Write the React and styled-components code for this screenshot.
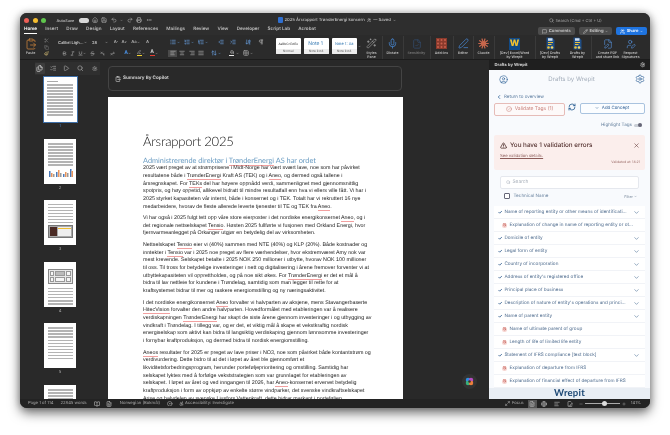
import React from 'react';
import styled, { createGlobalStyle } from 'styled-components';
import {
  Home, Save, Undo2, Redo2, Printer, MoreHorizontal, Search, MessageSquare, Pencil, ChevronDown, ChevronLeft,
  Scissors, Copy, Paintbrush, Bold, Italic, Underline, Strikethrough, Subscript, Superscript, List, ListOrdered,
  ListTree, IndentDecrease, IndentIncrease, ArrowDownAZ, Pilcrow, AlignLeft, AlignCenter, AlignRight, AlignJustify,
  ArrowUpDown, PaintBucket, Grid2x2, Mic, Files, ListChecks, Play, Settings, CircleUser, RefreshCw, Plus, TriangleAlert, X,
  Check, Ban, CircleCheck, Maximize2, FileText, Globe, BookOpen, FileSignature, Minus, Accessibility, CircleDot,
  ClipboardPaste, FilePen, UserPen, Wand2, PenLine, Users, FileCheck
} from 'lucide-react';

const Global = createGlobalStyle`
  html, body { margin: 0; padding: 0; background: #fff; width: 670px; height: 435px; overflow: hidden; }
  * { box-sizing: border-box; }
`;

const Page = styled.div`
  width: 670px; height: 435px; padding: 13px 20px 27px; background: #fff;
  font-family: "Inter", "Liberation Sans", sans-serif; filter: blur(.35px); text-rendering: geometricPrecision;
`;
const Win = styled.div`
  width: 630px; height: 395px; border-radius: 7px; overflow: hidden; background: #2a2a2a; color: #c8c8c8;
  display: flex; flex-direction: column; box-shadow: 0 5px 12px rgba(0,0,0,.55), 0 0 7px rgba(0,0,0,.25);
`;
const TitleBar = styled.div`
  height: 13px; flex: none; display: flex; align-items: center; padding: 1px 0 0 4px; background: #2e2e2e; position: relative;
`;
const Light = styled.span`
  width: 5px; height: 5px; border-radius: 50%; background: ${p => p.$c}; margin-right: 3.5px; flex: none;
`;
const AutoLabel = styled.span`font-size: 3.8px; font-weight: 600; margin: 0 3px 0 7px; color: #bdbdbd; width: 19px;`;
const Toggle = styled.span`
  width: 10px; height: 5px; border-radius: 3px; background: #d8d8d8; display: block; margin-right: 3px; flex: none;
`;
const QuickIcons = styled.div`display: flex; gap: 3.5px; align-items: center; color: #aaa; width: 186px;`;
const DocTitle = styled.div`
  display: flex; align-items: center; gap: 2px; font-size: 4.2px; color: #c4c4c4; width: 271px; flex: none; font-weight: 500;
`;
const WordBadge = styled.span`
  width: 5px; height: 6px; border-radius: 1px; background: #2f6fd0; display: block; flex: none;
`;
const SearchHint = styled.div`display: flex; align-items: center; gap: 2px; font-size: 4.05px; color: #a8a8a8;`;

const TabRow = styled.div`height: 9px; flex: none; display: flex; align-items: center; padding: 0 3px 0 4px; background: #2e2e2e;`;
const Tabs = styled.div`display: flex; gap: 8.2px; flex: 1;`;
const Tab = styled.span`
  font-size: 4.6px; font-weight: 600; color: ${p => p.$on ? '#fff' : '#bdbdbd'}; padding-bottom: .5px;
  border-bottom: 1px solid ${p => p.$on ? '#fff' : 'transparent'}; line-height: 6px; white-space: nowrap;
`;
const Actions = styled.div`display: flex; gap: 4px; margin-top: 1px;`;
const ActionBtn = styled.span`
  height: 8px; width: ${p => p.$w}px; border-radius: 2px; background: ${p => p.$blue ? '#1f74e0' : '#4c4c4c'}; color: ${p => p.$blue ? '#fff' : '#c9c9c9'};
  font-size: 4.2px; font-weight: 600; display: flex; align-items: center; justify-content: center; gap: 1.5px;
`;

const Ribbon = styled.div`
  height: 25px; flex: none; background: #2b2b2b; border-bottom: 1px solid #1c1c1c; display: flex; padding: 1px 0 0 4px; align-items: flex-start;
`;
const PasteBox = styled.div`
  width: 13px; flex: none; display: flex; flex-direction: column; align-items: center; gap: 1px; font-size: 3.6px; color: #ccc; font-weight: 500;
  margin-top: 2px; margin-right: 3px;
`;
const ClipCol = styled.div`width: 13px; flex: none; display: flex; flex-direction: column; gap: 1.5px; align-items: center; color: #777; margin-top: 2px; margin-right: 4px;`;
const ToolGroup = styled.div`
  display: flex; flex-direction: column; gap: 4px; width: ${p => p.$w}px; flex: none; padding-top: 2.5px; margin-right: ${p => p.$mr || 0}px;
`;
const ToolRow = styled.div`display: flex; align-items: center; height: 7px;`;
const Tool = styled.span`
  width: ${p => p.$w}px; flex: none; height: 7px; display: flex; align-items: center; justify-content: center; color: ${p => p.$c || '#b5b5b5'};
  font-size: 4.2px; font-weight: 600; background: ${p => p.$on ? '#4a4a4a' : 'transparent'};
`;
const StyleCaret = styled(Tool)`height: 16px; margin-top: 2px;`;
const FontField = styled.span`
  width: ${p => p.$w}px; flex: none; height: 6.5px; margin-right: 3px; font-size: 4px; font-weight: 600; color: #c6c6c6; display: flex; align-items: center; justify-content: space-between;
  white-space: nowrap; padding: 0 1px;
`;
const Up = styled.sup`font-size: 3px;`;
const Underbar = styled.span`display: block; width: 5px; height: 1.3px; background: ${p => p.$c}; margin-top: .3px;`;
const StackTool = styled.span`display: flex; flex-direction: column; align-items: center; line-height: 4px; font-size: 5px; font-weight: 700; color: ${p => p.$c};`;
const Styles = styled.div`display: flex; gap: 3.5px; margin-top: 2px;`;
const StyleCard = styled.div`
  width: 24.5px; height: 16px; background: #fff; border-radius: 1px; display: flex; flex-direction: column; overflow: hidden; color: ${p => p.$c || '#333'}; flex: none;
`;
const StylePreview = styled.div`flex: 1; font-size: ${p => p.$fs || 3.4}px; display: flex; align-items: center; justify-content: center; white-space: nowrap;`;
const StyleName = styled.div`font-size: 3px; text-align: center; line-height: 5px; color: #555; background: #ededed;`;
const Large = styled.div`
  width: ${p => p.$w}px; flex: none; display: flex; flex-direction: column; align-items: center; color: ${p => p.$dim ? '#777' : '#bdbdbd'}; padding-top: 1.5px;
  border-right: ${p => p.$sep ? '1px solid #3a3a3a' : 'none'}; height: 23px;
`;
const LargeIcon = styled.div`height: 12px; display: flex; align-items: center; justify-content: center;`;
const LargeLabel = styled.div`font-size: 3.5px; font-weight: 600; line-height: 4px; text-align: center; white-space: nowrap; margin-top: 1px;`;
const WLogo = styled.div`
  width: 11px; height: 12px; background: #114a86; color: #f2c230; font-size: 9px; line-height: 12px; font-weight: 800; text-align: center;
`;

const Body = styled.div`flex: 1; min-height: 0; display: flex; background: #292929;`;
const Rail = styled.div`width: 87px; flex: none; display: flex; flex-direction: column; align-items: center; overflow: hidden;`;
const RailTabs = styled.div`
  width: 65px; margin-left: 15px; align-self: flex-start; height: 13px; margin-top: 2px; background: #2f2f2f; display: flex; align-items: center; flex: none; gap: 3.4px; color: #a4a4a4;
`;
const RailTab = styled.span`
  width: 10px; height: 11px; display: flex; align-items: center; justify-content: center; background: ${p => p.$on ? '#3d3d3d' : 'transparent'}; color: ${p => p.$on ? '#d2d2d2' : 'inherit'}; border-radius: 1px;
  margin-left: ${p => p.$push || 0}px;
`;
const Thumbs = styled.div`display: flex; flex-direction: column; align-items: center; padding: 2px 7px 0 0;`;
const ThumbItem = styled.div`height: 61.5px; display: flex; flex-direction: column; align-items: center; flex: none;`;
const ThumbPage = styled.div`
  width: ${p => p.$on ? 33 : 32}px; height: 45px; background: #fff; padding: 4px 3.5px; display: flex; flex-direction: column; gap: 1.5px; flex: none;
  outline: ${p => p.$on ? '1px solid #3e6fa8' : 'none'};
`;
const ThumbTitle = styled.div`width: 11px; height: 1.2px; background: #aaa;`;
const ThumbText = styled.div`
  height: ${p => p.$h}px; flex: none;
  background: repeating-linear-gradient(#b4b4b4 0 .6px, #fff .6px 1.5px);
`;
const ThumbNum = styled.div`font-size: 4.2px; line-height: 9px; color: ${p => p.$on ? '#4a7bb5' : '#a8a8a8'};`;
const ThumbBand = styled.div`
  height: 13px; background: #a8a8a8; border: 1px solid #777; padding: 1px; display: flex; gap: 1px; flex: none;
`;
const Portrait = styled.div`width: 7px; background: #4a2a24; flex: none;`;
const BandBody = styled.div`flex: 1; background: #eee; padding-top: 1.5px;`;
const BandBar = styled.div`height: 1.2px; background: #f0bd30;`;
const TableMock = styled.div`
  height: 15px; border: 1px solid #888; background: #e8e8e8; margin: 2px 0; flex: none; display: grid; grid-template-columns: 1fr 2fr 1fr; gap: .8px; padding: 1px;
`;
const TableCell = styled.div`background: ${p => p.$d ? '#bbb' : '#f6f6f6'}; border: .5px solid #999;`;

const DocArea = styled.div`width: 382px; flex: none; padding: 6px 0 0 1px; display: flex; flex-direction: column; overflow: hidden; position: relative;`;
const SummaryBar = styled.div`
  width: 294px; height: 25px; flex: none; border: 1px solid #444; border-radius: 4px; display: flex; align-items: center; gap: 2px; padding-left: 6px;
  font-size: 4.6px; font-weight: 700; color: #cfcfcf; margin-bottom: 6px;
`;
const Sheet = styled.div`
  width: 295px; flex: 1; background: #fff; padding: 35px 0 0 35px; color: #1c1c1c; overflow: hidden;
`;
const DocTitleH = styled.div`font: 300 13px/18px "Lato", sans-serif; letter-spacing: -.2px; color: #111; white-space: nowrap;`;
const SubHead = styled.div`font: 400 7.35px/9px "Lato", sans-serif; color: #6a9cc2; white-space: nowrap; margin: 5.5px 0 .7px;`;
const Para = styled.div`margin: 0 0 3.9px;`;
const Line = styled.div`font: 400 5.33px/7.67px "Liberation Sans", sans-serif; white-space: nowrap;`;
const Spell = styled.span`border-bottom: .5px solid #f2a0a0;`;
const CopilotFab = styled.div`
  position: absolute; left: 355px; top: 314px; width: 15px; height: 15px; border-radius: 50%; background: #333; display: flex; align-items: center; justify-content: center;
`;

const Side = styled.div`width: 161px; flex: none; display: flex; flex-direction: column; overflow: hidden;`;
const SideHead = styled.div`
  height: 10px; flex: none; background: #1f1f1f; display: flex; align-items: center; justify-content: space-between; padding: 0 5px 0 5.5px;
  font-size: 4.2px; font-weight: 700; color: #d5d5d5;
`;
const SidePane = styled.div`flex: 1; min-height: 0; background: #f8fafd; overflow: hidden; padding: 0 5px; display: flex; flex-direction: column; color: #4d6b90;`;
const PaneTop = styled.div`height: 18px; flex: none; display: flex; align-items: center; justify-content: space-between; padding: 0 0 0 5px; color: #2a5e96;`;
const PaneTitle = styled.span`font-size: 6.1px; color: #a3adba;`;
const BackLink = styled.div`display: flex; align-items: center; gap: 2px; font-size: 4.5px; height: 8px; margin-top: 6px; padding-left: 2px; color: #5d7da0;`;
const BtnRow = styled.div`display: flex; align-items: flex-start; height: 14px; flex: none; margin-top: 2px; gap: 2.5px;`;
const ValidateBtn = styled.div`
  width: 71px; height: 13.5px; border: .8px solid #e6bcb8; border-radius: 2px; display: flex; align-items: center; justify-content: center; gap: 3px; font-size: 5px; color: #c9807a; background: #fdf9f9;
`;
const AddBtn = styled.div`
  width: 65px; height: 11.5px; border: .8px solid #a9c3df; border-radius: 2px; display: flex; align-items: center; justify-content: center; gap: 3px; font-size: 4.4px; color: #3d6a9d; background: #fbfdff;
  margin-left: 1.5px;
`;
const HighlightRow = styled.div`display: flex; align-items: center; justify-content: flex-end; gap: 2px; height: 8px; margin-top: 5.5px; font-size: 4.6px; padding-right: 3px; color: #67829f;`;
const MiniSwitch = styled.span`width: 8px; height: 3px; background: #c9ced6; border-radius: 2px; display: flex; justify-content: flex-end; align-items: center;`;
const SwitchKnob = styled.span`width: 4px; height: 4px; background: #667; border-radius: 50%; display: block;`;
const Alert = styled.div`
  margin-top: 6px; height: 35px; flex: none; background: #fbeeec; border-radius: 2px; padding: 6.5px 5px 0 6px; color: #4a2a28; display: flex; flex-direction: column;
`;
const AlertTop = styled.div`display: flex; align-items: center; gap: 3px; font-size: 6.3px; font-weight: 500; height: 8px;`;
const AlertText = styled.span`flex: 1; color: #53302e; white-space: nowrap;`;
const AlertLink = styled.div`font-size: 4.2px; text-decoration: underline; margin-top: 5px; line-height: 5px; color: #8b5b58;`;
const AlertTime = styled.div`font-size: 3.4px; text-align: right; color: #9a6b68; line-height: 4px; margin-top: .5px;`;
const SearchBox = styled.div`
  margin: 6px 6px 0; height: 13px; flex: none; background: #fff; border: .7px solid #e5e8ee; border-radius: 2px; display: flex; align-items: center; gap: 2px; padding-left: 5px; font-size: 4.8px; color: #a9b1bb;
`;
const HeadRow = styled.div`display: flex; align-items: center; height: 13px; flex: none; padding: 2px 8px 0 10px; font-size: 4.6px; color: #6b84a0; margin-bottom: 4.5px;`;
const Checkbox = styled.span`width: 5.5px; height: 5.5px; border: .7px solid #667; border-radius: 1px; display: block; margin-right: 4px; background: #fff; flex: none;`;
const HeadLabel = styled.span`flex: 1;`;
const FilterLabel = styled.span`font-size: 3.7px; display: flex; align-items: center; gap: 1px; color: #7c8c9e;`;
const Row = styled.div`
  height: 13px; flex: none; background: #fff; border-bottom: .7px solid #f1f3f7; display: flex; align-items: center; padding: 0 5px 0 ${p => p.$sub ? 8 : 3.5}px; gap: 2.4px; font-size: 4.65px; color: #4f6c8e;
`;
const RowText = styled.span`flex: 1; white-space: nowrap; overflow: hidden; min-width: 0;`;
const BanDot = styled.span`width: 5px; height: 5px; border-radius: 50%; background: #f6d4d0; display: flex; align-items: center; justify-content: center; color: #c0554c; flex: none;`;
const RowList = styled.div`display: flex; flex-direction: column; flex: none;`;
const SideFooter = styled.div`
  height: 11px; flex: none; background: #e9eef4; text-align: center; font: 700 9.6px/11px "Lato", sans-serif; color: #1d4874; letter-spacing: .2px;
`;

const Status = styled.div`height: 9px; flex: none; background: #232323; display: flex; align-items: center; padding: 0 9px 0 8px; font-size: 4.2px; color: #a9a9a9;`;
const StatusText = styled.span`white-space: nowrap; margin-right: ${p => p.$mr}px; margin-left: ${p => p.$ml || 0}px; flex: none;`;
const StatusIcon = styled.span`
  display: flex; align-items: center; justify-content: center; flex: none; color: #b5b5b5; width: ${p => p.$w}px; height: 8px; margin-right: ${p => p.$mr || 0}px; background: ${p => p.$on ? '#555' : 'transparent'};
`;
const Slider = styled.div`width: 35px; height: 1px; background: #aaa; margin: 0 2px; display: flex; align-items: center; padding-left: 17px; flex: none;`;
const SliderThumb = styled.span`width: 5px; height: 5px; background: #ddd; border-radius: 50%; display: block; flex: none;`;
const Spacer = styled.span`flex: 1;`;

const I = ({ c: C, s = 6, w = 2.4, ...r }) => <C size={s} strokeWidth={w} {...r} />;

const WrepitDoc = () => (
  <svg width="11" height="13" viewBox="0 0 22 26"><path d="M3 1h11l5 5v19H3z" fill="#1e4d86" /><rect x="6" y="2.5" width="9" height="5" fill="#cfe0f2" /><path d="M6 11h10M6 15h7" stroke="#ecc23a" strokeWidth="2.2" /><circle cx="7" cy="21" r="2.6" fill="#ecc23a" /><circle cx="14" cy="21" r="2.6" fill="#f4d765" /></svg>
);
const ClaudeMark = () => (
  <svg width="11" height="11" viewBox="0 0 22 22"><g stroke="#c8674c" strokeWidth="2.4" strokeLinecap="round">{Array.from({ length: 10 }).map((_, i) => { const a = i * Math.PI / 5; return <line key={i} x1="11" y1="11" x2={11 + 9.5 * Math.cos(a)} y2={11 + 9.5 * Math.sin(a)} />; })}</g><circle cx="11" cy="11" r="5" fill="#c8674c" /></svg>
);
const AddinsMark = () => (
  <svg width="11" height="11" viewBox="0 0 22 22"><rect width="22" height="22" fill="#8a3a2c" />{[4, 11, 18].map(x => [4, 11, 18].map(y => <circle key={x + '-' + y} cx={x} cy={y} r="2" fill="#c9604c" />))}</svg>
);
const CopilotMark = () => (
  <svg width="9" height="9" viewBox="0 0 18 18"><circle cx="6" cy="6" r="4.5" fill="#2f8fe0" /><circle cx="12" cy="6" r="4.5" fill="#b54bc0" /><circle cx="6" cy="12" r="4.5" fill="#3ab27a" /><circle cx="12" cy="12" r="4.5" fill="#eb7f3c" /><circle cx="9" cy="9" r="2.6" fill="#333" /></svg>
);

const MiniChart = () => (
  <svg width="25" height="9" viewBox="0 0 25 9">{[[1, 6, '#4a78b8'], [3, 4, '#e8945a'], [5, 3, '#9a9a9a'], [8, 5, '#4a78b8'], [10, 7, '#e8945a'], [12, 4, '#9a9a9a'], [15, 3, '#4a78b8'], [17, 5, '#e8945a'], [19, 4, '#9a9a9a'], [22, 8, '#4a78b8'], [23.5, 6, '#e8945a']].map(([x, h, c], i) => <rect key={i} x={x} y={9 - h} width="1.5" height={h} fill={c} />)}</svg>
);

const tabs = ['Home', 'Insert', 'Draw', 'Design', 'Layout', 'References', 'Mailings', 'Review', 'View', 'Developer', 'Script Lab', 'Acrobat'];

const docParas = [
  [['2025 vært preget av at strømprisene i Midt-Norge har vært svært lave, noe som har påvirket'],
   ['resultatene både i ', '*TrønderEnergi', ' Kraft AS (TEK) og i ', '*Aneo', ', og dermed også tallene i'],
   ['årsregnskapet. For ', '*TEKs', ' del har høyere oppnådd verdi, sammenlignet med gjennomsnittlig'],
   ['spotpris, og høy oppetid, allikevel bidratt til mindre resultatfall enn hva vi ellers ville fått. Vi har i'],
   ['2025 styrket kapasiteten vår internt, både i konsernet og i TEK. Totalt har vi rekruttert 16 nye'],
   ['medarbeidere, hvorav de fleste allerede leverte tjenester til TE og TEK fra ', '*Aneo', '.']],
  [['Vi har også i 2025 fulgt tett opp våre store eierposter i det nordiske energikonsernet ', '*Aneo', ', og i'],
   ['det regionale nettselskapet ', '*Tensio', '. Høsten 2025 fullførte vi fusjonen med Orkland Energi, hvor'],
   ['fjernvarmeanlegget på Orkanger utgjør en betydelig del av virksomheten.']],
  [['Nettselskapet ', '*Tensio', ' eier vi (40%) sammen med NTE (40%) og KLP (20%). Både kostnader og'],
   ['inntekter i ', '*Tensio', ' var i 2025 noe preget av flere værhendelser, hvor ekstremværet Amy nok var'],
   ['mest krevende. Selskapet betalte i 2025 NOK 250 millioner i utbytte, hvorav NOK 100 millioner'],
   ['til oss. Til tross for betydelige investeringer i nett og digitalisering i årene fremover forventer vi at'],
   ['utbyttekapasiteten vil opprettholdes, og på noe sikt økes. For ', '*TrønderEnergi', ' er det et mål å'],
   ['bidra til lav nettleie for kundene i Trøndelag, samtidig som man legger til rette for at'],
   ['kraftsystemet bidrar til mer og raskere energiomstilling og ny næringsaktivitet.']],
  [['I det nordiske energikonsernet ', '*Aneo', ' forvalter vi halvparten av aksjene, mens Stavangerbaserte'],
   ['*HitecVision', ' forvalter den andre halvparten. Hovedformålet med etableringen var å realisere'],
   ['verdiskapningen ', '*TrønderEnergi', ' har skapt de siste årene gjennom investeringer i og utbygging av'],
   ['vindkraft i Trøndelag. I tillegg var, og er det, et viktig mål å skape et vekstkraftig nordisk'],
   ['energiselskap som aktivt kan bidra til langsiktig verdiskaping gjennom lønnsomme investeringer'],
   ['i fornybar kraftproduksjon, og dermed bidra til nordisk energiomstilling.']],
  [['*Aneos', ' resultater for 2025 er preget av lave priser i NO3, noe som påvirket både kontantstrøm og'],
   ['verdivurdering. Dette bidro til at det i løpet av året ble gjennomført et'],
   ['likviditetsforbedringsprogram, herunder porteføljeprioritering og omstilling. Samtidig har'],
   ['selskapet lyktes med å forfølge vekststrategien som var grunnlaget for etableringen av'],
   ['selskapet. I løpet av året og ved inngangen til 2026, har ', '*Aneo', '-konsernet ervervet betydelig'],
   ['kraftproduksjon i form av oppkjøp av enkelte større vindparker, det svenske vindkraftselskapet'],
   ['Arise og halvdelen av svenske Ljusfors Vattenkraft, dette bidrar markant i porteføljen']],
];

const rows = [
  ['Name of reporting entity or other means of identificati...', 0],
  ['Explanation of change in name of reporting entity or ot...', 1],
  ['Domicile of entity', 0],
  ['Legal form of entity', 0],
  ['Country of incorporation', 0],
  ["Address of entity's registered office", 0],
  ['Principal place of business', 0],
  ["Description of nature of entity's operations and princi...", 0],
  ['Name of parent entity', 0],
  ['Name of ultimate parent of group', 1],
  ['Length of life of limited life entity', 1],
  ['Statement of IFRS compliance [text block]', 0],
  ['Explanation of departure from IFRS', 1],
  ['Explanation of financial effect of departure from IFRS', 1],
];

const Caret = ({ s = 3 }) => <ChevronDown size={s} strokeWidth={3} />;

const thumbs = [
  <><ThumbTitle /><ThumbText $h={32} /></>,
  <><ThumbText $h={24} /><MiniChart /></>,
  <><ThumbText $h={19} /><ThumbBand><Portrait /><BandBody><BandBar /></BandBody></ThumbBand></>,
  <><ThumbTitle /><TableMock>{Array.from({ length: 6 }).map((_, i) => <TableCell key={i} $d={i === 1} />)}</TableMock><ThumbText $h={17} /></>,
  <><ThumbText $h={11} /><ThumbText $h={11} /><ThumbText $h={8} /></>,
  <><ThumbText $h={18} /><ThumbText $h={12} /></>,
];

export default function App() {
  return (
    <Page>
      <Global />
      <Win>
        <TitleBar>
          <Light $c="#ed5f57" /><Light $c="#f5bd2f" /><Light $c="#5fc64d" />
          <AutoLabel>AutoSave</AutoLabel>
          <Toggle />
          <QuickIcons>
            <I c={Home} /><I c={Save} /><I c={Undo2} /><Caret /><I c={Redo2} /><I c={Printer} /><I c={MoreHorizontal} />
          </QuickIcons>
          <DocTitle><WordBadge />2025 Årsrapport TrønderEnergi konsern <I c={Users} s={4.5} /> — Saved <Caret /></DocTitle>
          <SearchHint><I c={Search} s={5} />Search (Cmd + Ctrl + U)</SearchHint>
        </TitleBar>
        <TabRow>
          <Tabs>{tabs.map((t, i) => <Tab key={t} $on={i === 0}>{t}</Tab>)}</Tabs>
          <Actions>
            <ActionBtn $w={37}><I c={MessageSquare} s={5} />Comments</ActionBtn>
            <ActionBtn $w={33}><I c={Pencil} s={5} />Editing<Caret /></ActionBtn>
            <ActionBtn $w={31} $blue><I c={Users} s={5} />Share<Caret /></ActionBtn>
          </Actions>
        </TabRow>
        <Ribbon>
          <PasteBox><I c={ClipboardPaste} s={12} w={1.4} color="#d98a3c" />Paste</PasteBox>
          <ClipCol><I c={Scissors} s={5} /><I c={Copy} s={5} /><I c={Paintbrush} s={5} color="#d8c07a" /></ClipCol>
          <ToolGroup $w={103} $mr={8}>
            <ToolRow>
              <FontField $w={31}>Calibri Ligh... <Caret /></FontField>
              <FontField $w={18}>28 <Caret /></FontField>
              <Tool $w={8}>A<Up>^</Up></Tool><Tool $w={8}>A<Up>v</Up></Tool>
              <Tool $w={15}>Aa <Caret /></Tool><Tool $w={9}>A</Tool>
            </ToolRow>
            <ToolRow>
              <Tool $w={3} />
              <Tool $w={8}><I c={Bold} s={5} /></Tool><Tool $w={8}><I c={Italic} s={5} /></Tool><Tool $w={12}><I c={Underline} s={5} /><Caret /></Tool>
              <Tool $w={9}><I c={Strikethrough} s={5} /></Tool><Tool $w={10}><I c={Subscript} s={5} /></Tool><Tool $w={10}><I c={Superscript} s={5} /></Tool>
              <Tool $w={4} />
              <Tool $w={13}><StackTool $c="#4a8fe0">A</StackTool><Caret /></Tool>
              <Tool $w={13}><StackTool $c="#ccc"><I c={PenLine} s={4} /><Underbar $c="#f2d22e" /></StackTool><Caret /></Tool>
              <Tool $w={13}><StackTool $c="#ccc">A<Underbar $c="#e23c32" /></StackTool><Caret /></Tool>
            </ToolRow>
          </ToolGroup>
          <ToolGroup $w={100} $mr={8}>
            <ToolRow>
              <Tool $w={14} $c="#6ca6ea"><I c={List} />&nbsp;<Caret /></Tool><Tool $w={14} $c="#6ca6ea"><I c={ListOrdered} />&nbsp;<Caret /></Tool><Tool $w={14} $c="#6ca6ea"><I c={ListTree} />&nbsp;<Caret /></Tool>
              <Tool $w={5} /><Tool $w={12} $c="#6ca6ea"><I c={IndentDecrease} /></Tool><Tool $w={12} $c="#6ca6ea"><I c={IndentIncrease} /></Tool>
              <Tool $w={3} /><Tool $w={12} $c="#6ca6ea"><I c={ArrowDownAZ} /></Tool><Tool $w={14}><I c={Pilcrow} /></Tool>
            </ToolRow>
            <ToolRow>
              <Tool $w={9} $on><I c={AlignLeft} /></Tool><Tool $w={10}><I c={AlignCenter} /></Tool><Tool $w={9}><I c={AlignRight} /></Tool><Tool $w={10}><I c={AlignJustify} /></Tool>
              <Tool $w={3} /><Tool $w={14} $c="#6ca6ea"><I c={ArrowUpDown} />&nbsp;<Caret /></Tool><Tool $w={4} />
              <Tool $w={14}><StackTool $c="#ccc"><I c={PaintBucket} s={4.5} /><Underbar $c="#e8e8e8" /></StackTool>&nbsp;<Caret /></Tool>
              <Tool $w={14}><I c={Grid2x2} />&nbsp;<Caret /></Tool>
            </ToolRow>
          </ToolGroup>
          <Styles>
            <StyleCard><StylePreview $fs={3.1}>AaBbCcDdEe</StylePreview><StyleName>Normal</StyleName></StyleCard>
            <StyleCard $c="#3b7db5"><StylePreview $fs={5}>Note 1&nbsp;</StylePreview><StyleName>Note list 8</StyleName></StyleCard>
            <StyleCard $c="#3b7db5"><StylePreview $fs={3.9}>Note 1: Aa</StylePreview><StyleName>Note list 8</StyleName></StyleCard>
          </Styles>
          <StyleCaret $w={5}><Caret /></StyleCaret>
          <Large $w={21} $sep><LargeIcon><I c={Wand2} s={11} w={1.2} /></LargeIcon><LargeLabel>Styles<br />Pane</LargeLabel></Large>
          <Large $w={21} $sep><LargeIcon><I c={Mic} s={11} w={1.6} color="#4a8fe0" /></LargeIcon><LargeLabel>Dictate</LargeLabel></Large>
          <Large $w={27} $sep $dim><LargeIcon><I c={FileCheck} s={10} w={1.4} color="#35557e" /></LargeIcon><LargeLabel>Sensitivity</LargeLabel></Large>
          <Large $w={23} $sep><LargeIcon><AddinsMark /></LargeIcon><LargeLabel>Add-ins</LargeLabel></Large>
          <Large $w={20} $sep><LargeIcon><I c={PenLine} s={11} w={1.5} color="#4a8fe0" /></LargeIcon><LargeLabel>Editor</LargeLabel></Large>
          <Large $w={21} $sep><LargeIcon><ClaudeMark /></LargeIcon><LargeLabel>Claude</LargeLabel></Large>
          <Large $w={41} $sep><LargeIcon><WLogo>W</WLogo></LargeIcon><LargeLabel>[Dev] Excel/Word<br />by Wrepit</LargeLabel></Large>
          <Large $w={29}><LargeIcon><WrepitDoc /></LargeIcon><LargeLabel>[Dev] Drafts<br />by Wrepit</LargeLabel></Large>
          <Large $w={27} $sep><LargeIcon><WrepitDoc /></LargeIcon><LargeLabel>Drafts by<br />Wrepit</LargeLabel></Large>
          <Large $w={32}><LargeIcon><I c={FilePen} s={10} w={1.4} color="#5b9be8" /></LargeIcon><LargeLabel>Create PDF<br />and share link</LargeLabel></Large>
          <Large $w={14}><LargeIcon><I c={UserPen} s={10} w={1.4} color="#5b9be8" /></LargeIcon><LargeLabel>Request<br />Signatures</LargeLabel></Large>
        </Ribbon>
        <Body>
          <Rail>
            <RailTabs>
              <RailTab $on><I c={Files} s={7} /></RailTab>
              <RailTab><I c={ListChecks} s={6.5} /></RailTab>
              <RailTab><I c={Play} s={6.5} /></RailTab>
              <RailTab><I c={Search} s={6.5} /></RailTab>
              <RailTab $push={2}><I c={Settings} s={5.5} /></RailTab>
            </RailTabs>
            <Thumbs>
              {thumbs.map((t, i) => (
                <ThumbItem key={i}>
                  <ThumbPage $on={i === 0}>{t}</ThumbPage>
                  {i < 5 && <ThumbNum $on={i === 0}>{i + 1}</ThumbNum>}
                </ThumbItem>
              ))}
            </Thumbs>
          </Rail>
          <DocArea>
            <SummaryBar><I c={ClipboardPaste} s={6} />Summary By Copilot</SummaryBar>
            <Sheet>
              <DocTitleH>Årsrapport 2025</DocTitleH>
              <SubHead>Administrerende direktør i <Spell>TrønderEnergi</Spell> AS har ordet</SubHead>
              {docParas.map((p, i) => (
                <Para key={i}>
                  {p.map((l, j) => (
                    <Line key={j}>{l.map((s, k) => s[0] === '*' ? <Spell key={k}>{s.slice(1)}</Spell> : <React.Fragment key={k}>{s}</React.Fragment>)}</Line>
                  ))}
                </Para>
              ))}
            </Sheet>
            <CopilotFab><CopilotMark /></CopilotFab>
          </DocArea>
          <Side>
            <SideHead>Drafts by Wrepit<I c={Settings} s={5.5} /></SideHead>
            <SidePane>
              <PaneTop><I c={CircleUser} s={9} w={1.6} /><PaneTitle>Drafts by Wrepit</PaneTitle><I c={Settings} s={10} w={1.6} /></PaneTop>
              <BackLink><I c={ChevronLeft} s={6} w={3} color="#2a5e96" />Return to overview</BackLink>
              <BtnRow>
                <ValidateBtn><I c={CircleCheck} s={6} w={2} />Validate Tags (1)</ValidateBtn>
                <I c={RefreshCw} s={8} w={2.4} color="#23598f" />
                <AddBtn><I c={ChevronDown} s={4} w={3} />Add Concept</AddBtn>
              </BtnRow>
              <HighlightRow>Highlight Tags <MiniSwitch><SwitchKnob /></MiniSwitch></HighlightRow>
              <Alert>
                <AlertTop><I c={TriangleAlert} s={7} w={2.6} color="#4a2a28" /><AlertText>You have 1 validation errors</AlertText><I c={X} s={7} w={2} color="#6a4240" /></AlertTop>
                <AlertLink>See validation details.</AlertLink>
                <AlertTime>Validated at: 14:21</AlertTime>
              </Alert>
              <SearchBox><I c={Search} s={4.5} />Search</SearchBox>
              <HeadRow><Checkbox /><HeadLabel>Technical Name</HeadLabel><FilterLabel>Filter <Caret /></FilterLabel></HeadRow>
              <RowList>
                {rows.map(([t, sub]) => (
                  <Row key={t} $sub={sub}>
                    {sub ? <BanDot><I c={Ban} s={3.4} w={3} /></BanDot> : <I c={Check} s={4.5} w={4} color="#1f4f86" />}
                    <RowText>{t}</RowText>
                    {!sub && <I c={ChevronDown} s={7} w={2} color="#4d7296" />}
                  </Row>
                ))}
              </RowList>
            </SidePane>
            <SideFooter>Wrepit</SideFooter>
          </Side>
        </Body>
        <Status>
          <StatusText $mr={7}>Page 1 of 114</StatusText>
          <StatusText $mr={6}>22845 words</StatusText>
          <StatusIcon $w={8} $mr={5}><I c={BookOpen} s={6} /></StatusIcon>
          <StatusIcon $w={6} $mr={8}><I c={FileText} s={6} /></StatusIcon>
          <StatusText $mr={7}>Norwegian (Bokmål)</StatusText>
          <StatusIcon $w={6} $mr={6}><I c={CircleDot} s={5.5} /></StatusIcon>
          <StatusIcon $w={5} $mr={1}><I c={Accessibility} s={5.5} /></StatusIcon>
          <StatusText $mr={0}>Accessibility: Investigate</StatusText>
          <Spacer />
          <StatusIcon $w={6} $mr={1}><I c={Maximize2} s={5} /></StatusIcon>
          <StatusText $mr={4}>Focus</StatusText>
          <StatusIcon $w={9} $mr={4} $on><I c={FileText} s={6} /></StatusIcon>
          <StatusIcon $w={6} $mr={7}><I c={Globe} s={6} /></StatusIcon>
          <StatusIcon $w={6} $mr={7}><I c={AlignLeft} s={6} /></StatusIcon>
          <StatusIcon $w={6} $mr={6}><I c={FileSignature} s={6} /></StatusIcon>
          <I c={Minus} s={4} />
          <Slider><SliderThumb /></Slider>
          <I c={Plus} s={4} />
          <StatusText $mr={0} $ml={5}>141%</StatusText>
        </Status>
      </Win>
    </Page>
  );
}
